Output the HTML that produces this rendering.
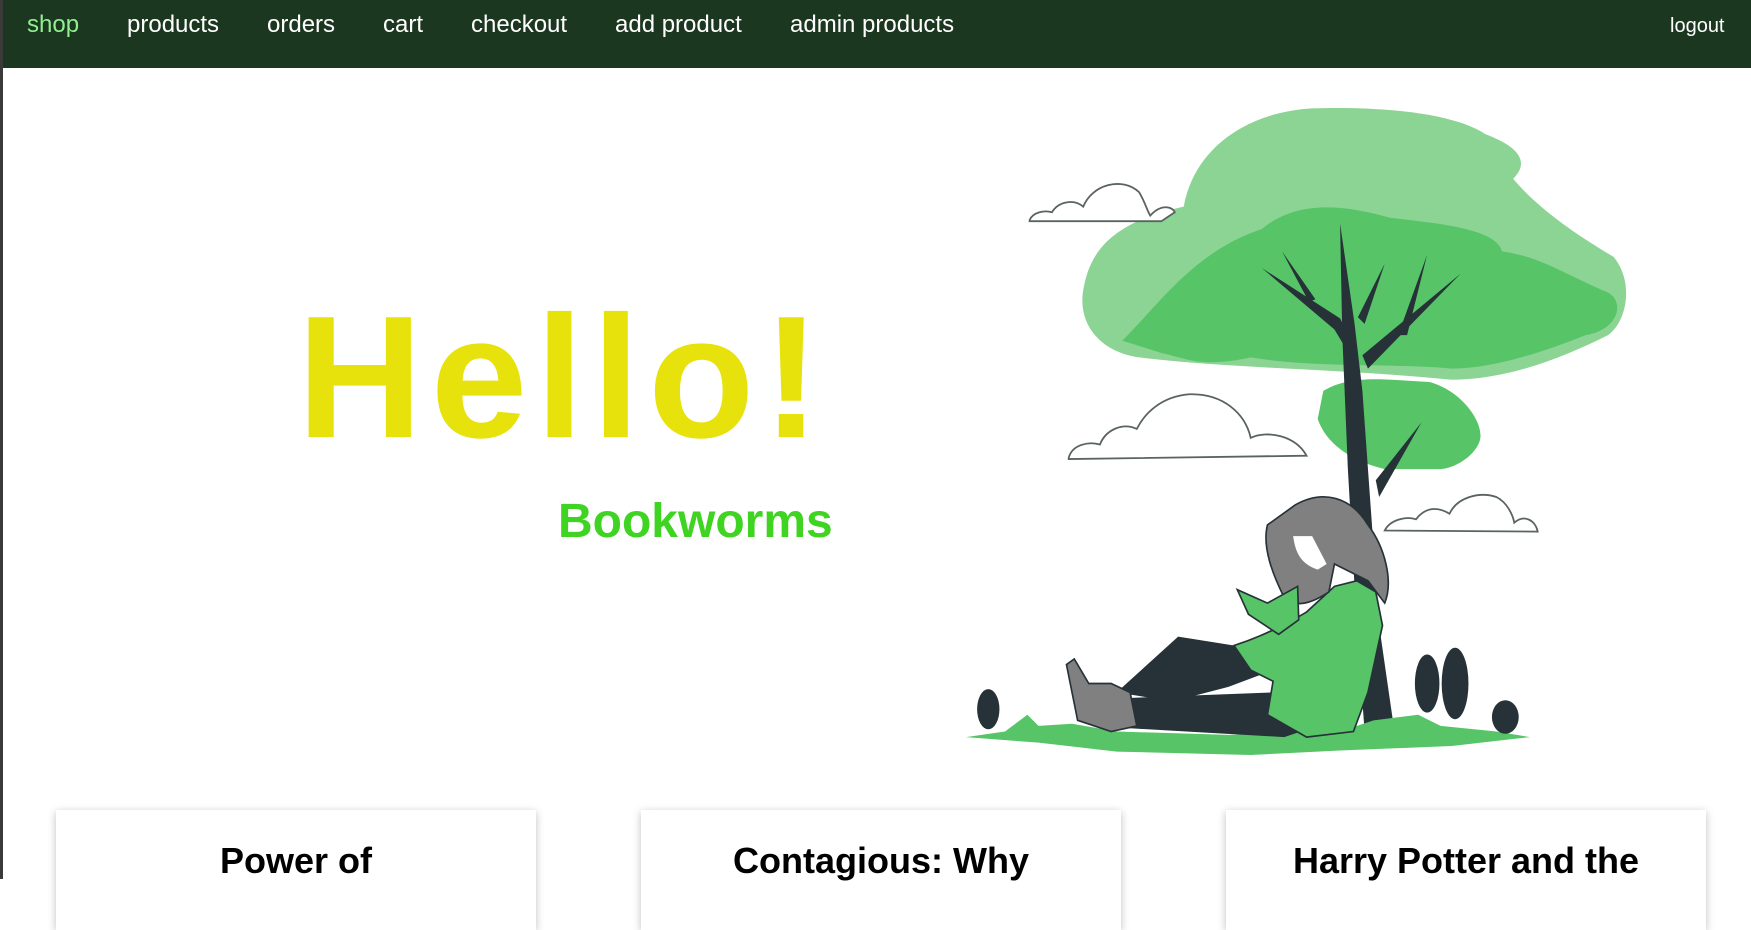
<!DOCTYPE html>
<html><head><meta charset="utf-8">
<style>
html,body{margin:0;padding:0;width:1751px;height:879px;overflow:hidden;background:#fff;font-family:"Liberation Sans",Arial,sans-serif;}
.lb{position:absolute;left:0;top:0;width:3px;height:879px;background:#3a3a3a;z-index:5}
nav{position:absolute;left:0;top:0;width:1751px;height:68px;background:#1c3720;}
nav a{position:absolute;top:11px;color:#fff;font-size:24px;text-decoration:none;}
nav a.act{color:#90ee90}
nav a.lo{font-size:20px;top:15px}
.hello{position:absolute;left:297px;top:290px;font-size:174px;font-weight:bold;color:#e8e20c;letter-spacing:8px;line-height:1;}
.bw{position:absolute;left:558px;top:498px;font-size:48px;font-weight:bold;color:#3fd421;line-height:1;}
svg.art{position:absolute;left:0;top:0}
.card{position:absolute;top:810px;width:480px;height:120px;background:#fff;box-shadow:0 2px 8px rgba(0,0,0,.25);text-align:center;font-weight:bold;font-size:36px;}
.card span{display:block;margin-top:30px}
</style></head><body>
<div class="lb"></div>
<nav>
<a class="act" style="left:27px">shop</a>
<a style="left:127px">products</a>
<a style="left:267px">orders</a>
<a style="left:383px">cart</a>
<a style="left:471px">checkout</a>
<a style="left:615px">add product</a>
<a style="left:790px">admin products</a>
<a class="lo" style="left:1670px">logout</a>
</nav>
<div class="hello">Hello!</div>
<div class="bw">Bookworms</div>
<svg class="art" width="1751" height="879" viewBox="0 0 1568 787">
<path d="M1060 185 C1070 130 1120 100 1175 97 C1230 95 1300 100 1330 120 C1370 135 1365 150 1355 160 C1380 190 1420 215 1445 230 C1465 255 1455 290 1440 300 C1400 320 1350 340 1300 340 C1200 330 1100 330 1020 320 C985 315 965 290 970 260 C975 230 990 200 1060 185Z" fill="#8bd494"/>
<path d="M1005 305 C1040 270 1070 225 1130 205 C1160 180 1200 182 1245 195 C1290 200 1340 205 1345 225 C1380 230 1400 245 1440 262 C1455 270 1450 295 1420 300 C1370 320 1330 330 1300 330 C1250 325 1180 330 1120 320 C1075 330 1060 320 1040 316 Z" fill="#57c468"/>
<path d="M1185 350 C1210 335 1240 340 1280 342 C1310 350 1330 380 1325 395 C1320 410 1300 420 1290 420 L1240 420 C1200 410 1185 390 1180 375Z" fill="#57c468"/>
<g fill="#fff" stroke="#5a6360" stroke-width="1.6">
<path d="M922 197 C925 190 935 188 942 190 C948 180 962 178 970 185 C978 165 1005 158 1020 172 C1025 180 1027 188 1030 193 C1040 182 1050 185 1052 190 L1040 198 L922 198Z"/>
<path d="M957 410 C960 398 975 395 985 398 C990 385 1005 378 1018 384 C1025 370 1040 355 1065 353 C1095 352 1115 370 1120 392 C1135 385 1160 390 1170 408 L957 411Z"/>
<path d="M1240 475 C1245 465 1260 462 1268 465 C1278 452 1290 455 1298 460 C1305 445 1325 440 1340 445 C1350 450 1355 462 1356 468 C1365 460 1375 466 1377 476 Z"/>
</g>
<g fill="#263238">
<path d="M1200 200 L1213 290 L1220 350 L1225 420 L1235 560 L1248 650 L1222 655 L1215 560 L1207 420 L1202 300Z"/>
<path d="M1130 240 L1200 285 L1213 310 L1210 320 L1195 295Z"/>
<path d="M1148 225 L1178 268 L1172 270Z"/>
<path d="M1308 245 L1225 330 L1220 318Z"/>
<path d="M1278 228 L1260 300 L1252 300Z"/>
<path d="M1240 236 L1222 290 L1216 284Z"/>
<path d="M1273 378 L1235 445 L1232 430Z"/>
</g>
<path d="M865 660 L900 655 L920 640 L930 650 L960 648 L1000 655 L1100 658 L1200 655 L1230 645 L1270 640 L1290 650 L1340 655 L1370 660 L1300 668 L1200 672 L1120 676 L1000 673 L930 665Z" fill="#57c468"/>
<path d="M1000 620 L1055 570 L1105 578 L1140 600 L1100 615 L1050 628 Z" fill="#263238"/>
<path d="M1010 625 L1140 620 L1180 650 L1150 660 L1010 652 Z" fill="#263238"/>
<path d="M955 595 L962 590 L975 612 L995 612 L1012 620 L1018 650 L995 655 L965 645 Z" fill="#808080" stroke="#263238" stroke-width="1.5"/>
<path d="M1105 578 C1130 570 1150 560 1170 548 L1195 525 L1215 520 L1232 530 L1238 560 L1225 620 L1212 655 L1170 660 L1135 640 L1140 610 L1120 600Z" fill="#57c468" stroke="#263238" stroke-width="1.5"/>
<path d="M1160 452 C1185 438 1210 445 1225 470 C1240 490 1248 520 1240 540 L1225 520 L1195 505 L1190 530 C1175 540 1160 545 1150 535 C1140 515 1130 490 1135 470 Z" fill="#808080" stroke="#263238" stroke-width="1.5"/>
<path d="M1158 480 C1160 495 1165 505 1180 510 L1188 505 L1175 480Z" fill="#fff"/>
<path d="M1108 528 L1135 540 L1162 525 L1163 555 L1145 568 L1118 550Z" fill="#57c468" stroke="#263238" stroke-width="1.5"/>
<g fill="#263238">
<ellipse cx="885" cy="635" rx="10" ry="18"/>
<ellipse cx="1278" cy="612" rx="11" ry="26"/>
<ellipse cx="1303" cy="612" rx="12" ry="32"/>
<ellipse cx="1348" cy="642" rx="12" ry="15"/>
</g>
</svg>
<div class="card" style="left:56px"><span>Power of</span></div>
<div class="card" style="left:641px"><span>Contagious: Why</span></div>
<div class="card" style="left:1226px"><span>Harry Potter and the</span></div>
</body></html>
